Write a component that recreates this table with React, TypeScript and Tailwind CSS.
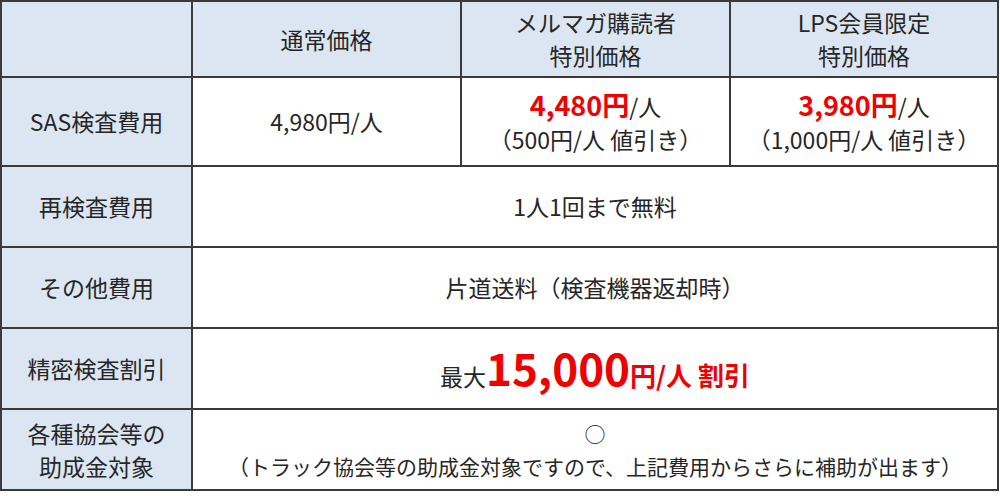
const font = { fontFamily: '"Noto Sans CJK JP", "Noto Sans", sans-serif' };

function Cell({ children, head = false, className = "" }: { children: React.ReactNode; head?: boolean; className?: string }) {
  return (
    <div className={`flex flex-col items-center justify-center text-center leading-[33px] ${head ? "bg-[#dce6f2]" : "bg-white"} ${className}`}>
      {children}
    </div>
  );
}

export default function App() {
  return (
    <div className="bg-white w-[1000px] h-[496px]" style={font}>
      <div className="grid w-[999px] grid-cols-[189px_267px_267px_266px] grid-rows-[74px_87px_79px_79px_79px_79px] gap-[2px] bg-[#3a3a3a] p-[2px] text-[23px] text-[#262626]">
        <Cell head>{""}</Cell>
        <Cell head>通常価格</Cell>
        <Cell head>
          <span>メルマガ購読者</span>
          <span>特別価格</span>
        </Cell>
        <Cell head>
          <span>LPS会員限定</span>
          <span>特別価格</span>
        </Cell>

        <Cell head>SAS検査費用</Cell>
        <Cell>4,980円/人</Cell>
        <Cell>
          <span className="leading-[34px]">
            <b className="text-[27px] text-[#f00000]">4,480円</b>/人
          </span>
          <span>（500円/人 値引き）</span>
        </Cell>
        <Cell>
          <span className="leading-[34px]">
            <b className="text-[27px] text-[#f00000]">3,980円</b>/人
          </span>
          <span>（1,000円/人 値引き）</span>
        </Cell>

        <Cell head>再検査費用</Cell>
        <Cell className="col-span-3">1人1回まで無料</Cell>

        <Cell head>その他費用</Cell>
        <Cell className="col-span-3">片道送料（検査機器返却時）</Cell>

        <Cell head>精密検査割引</Cell>
        <Cell className="col-span-3">
          <span className="flex items-baseline">
            最大
            <b className="text-[44px] leading-none text-[#f00000]">15,000</b>
            <b className="text-[26px] text-[#f00000]">円/人 割引</b>
          </span>
        </Cell>

        <Cell head>
          <span>各種協会等の</span>
          <span>助成金対象</span>
        </Cell>
        <Cell className="col-span-3 text-[21px] leading-[31px]">
          <span>○</span>
          <span>（トラック協会等の助成金対象ですので、上記費用からさらに補助が出ます）</span>
        </Cell>
      </div>
    </div>
  );
}
